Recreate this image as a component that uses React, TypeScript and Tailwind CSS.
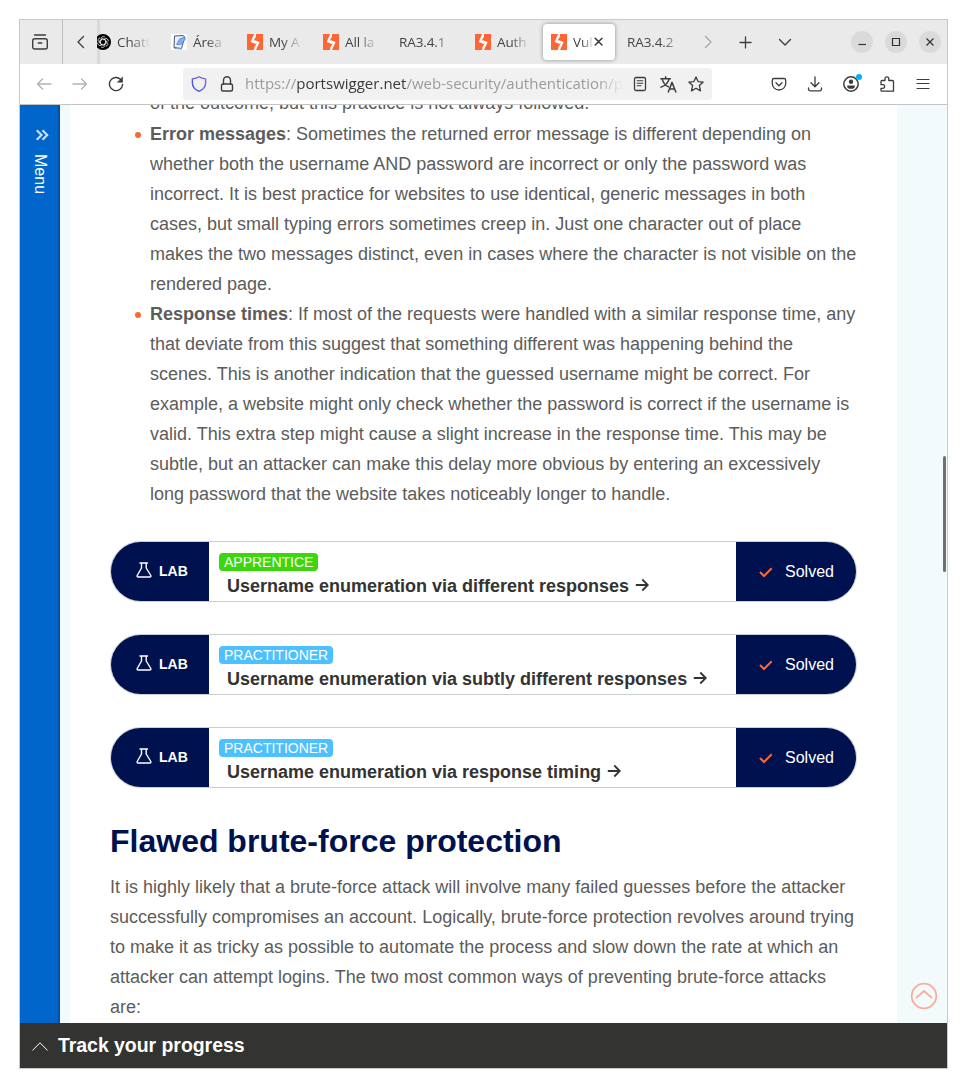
import type { ReactNode } from 'react';

const uiFont = "font-['Open_Sans','Noto_Sans',sans-serif]";
const pageFont = "font-['Liberation_Sans',Arial,sans-serif]";

function Icon({ children, size = 16, w = 1.4, cls = '' }: { children: ReactNode; size?: number; w?: number; cls?: string }) {
  return (
    <svg width={size} height={size} viewBox="0 0 16 16" fill="none" stroke="currentColor" strokeWidth={w} strokeLinecap="round" strokeLinejoin="round" className={`shrink-0 ${cls}`}>
      {children}
    </svg>
  );
}

function BurpLogo() {
  return (
    <svg width="16" height="16" viewBox="0 0 16 16" className="shrink-0">
      <rect width="16" height="16" fill="#ff6633" />
      <path d="M7.2 0H9V2.6L6.6 6.6L9 7.9V9.9L3.6 7.9Z" fill="#fff" />
      <path d="M9 16H7.2V13.4L9.7 9.6L7.2 8.2V6.1L12.6 8.1Z" fill="#fff" />
    </svg>
  );
}

function ChatLogo() {
  return (
    <svg width="16" height="16" viewBox="0 0 16 16" className="shrink-0">
      <circle cx="8" cy="8" r="8" fill="#000" />
      <g fill="none" stroke="#fff" strokeWidth="0.7">
        {[0, 60, 120, 180, 240, 300].map((a) => (
          <path key={a} transform={`rotate(${a} 8 8)`} d="M6.200 7V4.400A2.200 2.200 0 0 1 10.200 3.500M6.200 5.800L8.200 4.700L11 6.300" />
        ))}
      </g>
    </svg>
  );
}

function NoteLogo() {
  return (
    <svg width="16" height="16" viewBox="0 0 16 16" className="shrink-0">
      <rect width="16" height="16" fill="#fff" />
      <path d="M3.500 2L12 1.500L13.800 3L10.500 14.500L3 13.500Z" fill="#e9f1fd" stroke="#34456b" strokeWidth="0.900" />
      <path d="M5.500 10.500L8.500 5L13.500 3L14.500 5L10 10.500Z" fill="#85aef5" stroke="#3569c4" strokeWidth="0.600" />
      <path d="M3 14.500L11 15" stroke="#8aa2cc" />
    </svg>
  );
}

const tabs: { label: string; icon?: ReactNode; active?: boolean }[] = [
  { label: 'ChatG', icon: <ChatLogo /> },
  { label: 'Área', icon: <NoteLogo /> },
  { label: 'My A', icon: <BurpLogo /> },
  { label: 'All la', icon: <BurpLogo /> },
  { label: 'RA3.4.1' },
  { label: 'Auth', icon: <BurpLogo /> },
  { label: 'Vul', icon: <BurpLogo />, active: true },
  { label: 'RA3.4.2' },
];

function Tab({ label, icon, active }: { label: string; icon?: ReactNode; active?: boolean }) {
  return (
    <div className="flex h-11 w-[76px] shrink-0 items-center px-0.5">
      <div className={`flex h-9 w-[72px] items-center rounded px-2 ${active ? 'bg-white shadow-[0_0_4px_rgba(0,0,0,0.4)]' : ''}`}>
        {icon && <span className="mr-1.5 flex">{icon}</span>}
        <span
          className={`min-w-0 flex-1 overflow-hidden text-[13.5px] leading-5 tracking-[-0.1px] whitespace-nowrap text-[#444] ${
            icon ? 'mask-[linear-gradient(to_right,black_40%,transparent_98%)]' : 'mask-[linear-gradient(to_right,black_65%,transparent_98%)]'
          }`}
        >
          {label}
        </span>
        {active && (
          <Icon size={12} w={1.9} cls="-ml-0.5 mr-0.5 text-[#333]">
            <path d="M3 3l9 9M12 3l-9 9" />
          </Icon>
        )}
      </div>
    </div>
  );
}

function TabBar() {
  return (
    <div className="flex h-11 shrink-0 items-center bg-[#eaeaea] text-[#3c3c3c]">
      <div className="flex h-11 w-[43px] items-center justify-center border-r border-[#bdbdbd] pr-0.5">
        <svg width="18" height="16" viewBox="0 0 18 16" fill="none" stroke="currentColor" strokeWidth="1.4" strokeLinecap="round">
          <path d="M3.5 1h11" />
          <rect x="1.7" y="4.7" width="14.6" height="10.3" rx="2" />
          <path d="M7.2 9h3.6" />
        </svg>
      </div>
      <div className="flex w-[34px] justify-center pl-0.5">
        <Icon w={1.3}><path d="M10.5 2.5L5 8l5.500 5.500" /></Icon>
      </div>
      <div className="w-[596px] overflow-hidden bg-linear-to-r from-[#d8d8d8] from-[2px] to-transparent to-[4px]">
        <div className="-ml-3 flex">
          {tabs.map((t, i) => <Tab key={i} {...t} />)}
        </div>
      </div>
      <div className="flex w-[30px] justify-center text-[#a5a5a5]">
        <Icon w={1.3}><path d="M5.500 2.500L11 8l-5.500 5.500" /></Icon>
      </div>
      <div className="flex w-[42px] justify-center pl-px">
        <Icon w={1.3}><path d="M8.500 3v11M3 8.500h11" /></Icon>
      </div>
      <div className="flex w-10 justify-center">
        <Icon w={1.4}><path d="M2.500 5.500L8 11l5.500-5.500" /></Icon>
      </div>
      <div className="ml-auto flex gap-3 pr-1.5">
        {['M4.500 10.500h7.500', 'M4.500 4.500h7v7h-7z', 'M4.500 4.500l7 7M11.500 4.500l-7 7'].map((d) => (
          <div key={d} className="flex size-[22px] items-center justify-center rounded-full bg-[#dadada]">
            <svg width="16" height="16" viewBox="0 0 16 16" fill="none" stroke="#333" strokeWidth="1.2"><path d={d} /></svg>
          </div>
        ))}
      </div>
    </div>
  );
}

function Cell({ children }: { children: ReactNode }) {
  return <div className="flex w-9 justify-center">{children}</div>;
}

function Toolbar() {
  return (
    <div className="flex h-[41px] shrink-0 items-center border-b border-[#c4c4c4] bg-white pl-1.5 text-[#3c3c3c]">
      <div className="flex text-[#b3b3b3]">
        <Cell><Icon w={1.4}><path d="M15 8H1.500M6.500 3L1.500 8l5 5" /></Icon></Cell>
        <Cell><Icon w={1.4}><path d="M1 8h13.500M9.500 3l5 5-5 5" /></Icon></Cell>
      </div>
      <Cell>
        <Icon w={1.4}>
          <path d="M12.500 3.200A6.600 6.600 0 1 0 14.600 8.500" />
          <path d="M14.600 1.200v5h-5z" fill="currentColor" strokeWidth="0.600" />
        </Icon>
      </Cell>
      <div className="ml-[49px] flex h-8 w-[529px] items-center rounded bg-[#f1f1f1] pl-0.5">
        <div className="flex w-7 justify-center">
          <svg width="16" height="16" viewBox="0 0 16 16" fill="none" strokeWidth="1.4" strokeLinejoin="round">
            <defs><linearGradient id="shield" x1="0" y1="1" x2="1" y2="0"><stop stopColor="#3457d5" /><stop offset="1" stopColor="#8a63f0" /></linearGradient></defs>
            <path stroke="url(#shield)" d="M8 .8C6.300 2 3.800 2.700 1.400 2.900V7c0 4 2.800 6.800 6.600 8.300C11.800 13.800 14.600 11 14.600 7V2.900C12.200 2.700 9.700 2 8 .8z" />
          </svg>
        </div>
        <div className="flex w-7 justify-center">
          <Icon w={1.4}>
            <rect x="2.500" y="8" width="11" height="7" rx="1.500" />
            <path d="M4.500 8V4.200a3.500 3.500 0 0 1 7 0V8" />
          </Icon>
        </div>
        <div className="-mt-0.5 ml-1 w-[378px] overflow-hidden mask-[linear-gradient(to_right,black_93%,transparent_100%)] text-[15px] leading-6 tracking-[0.01px] whitespace-nowrap text-[#9b9b9b]">
          https://<span className="text-[#3a3a3a]">portswigger.net</span>/web-security/authentication/pa
        </div>
        <div className="flex pl-[3px]">
          <div className="flex w-7 justify-center">
            <Icon w={1.3}>
              <rect x="2.500" y="1.500" width="11" height="13" rx="1.500" />
              <path d="M5.200 4.700h5.600M5.200 7.200h5.600M5.200 9.700h3.800" strokeWidth="1.100" />
            </Icon>
          </div>
          <div className="flex w-7 justify-center">
            <Icon w={1.400} size={17}>
              <path d="M.8 2.500h9M5.300 .8v1.700M2 2.700c1 4 3.800 6.500 6 7.500M8.600 2.700C7.600 6.500 4.500 9.300 1 10.500" />
              <path d="M7.800 15l3.500-9 3.600 9M9 12.300h4.700" />
            </Icon>
          </div>
          <div className="flex w-7 justify-center">
            <Icon w={1.300}><path d="M8 .9l2.100 4.700 5.100.5-3.800 3.500 1.100 5.300L8 12.300l-4.500 2.600 1.100-5.300L.8 6.100l5.100-.5z" /></Icon>
          </div>
        </div>
      </div>
      <div className="ml-[49px] flex">
        <Cell>
          <Icon w={1.300}>
            <path d="M3 2.500h10a1.700 1.700 0 0 1 1.700 1.700v3.300a6.700 6.500 0 0 1-13.400 0V4.200A1.700 1.700 0 0 1 3 2.500z" />
            <path d="M5 6.700l3 3 3-3" />
          </Icon>
        </Cell>
        <Cell>
          <Icon w={1.300}>
            <path d="M8 .8v9.700M4 6.700l4 4 4-4M1.500 12v1a1.800 1.800 0 0 0 1.800 1.800h9.400a1.800 1.800 0 0 0 1.800-1.800v-1" />
          </Icon>
        </Cell>
        <div className="relative flex w-9 justify-center">
          <Icon w={1.500}>
            <circle cx="8" cy="8" r="7.200" />
            <circle cx="8" cy="5.800" r="2.200" fill="currentColor" stroke="none" />
            <path d="M4.200 9.500h7.600v1a3.800 2.300 0 0 1-7.600 0z" fill="currentColor" stroke="none" />
          </Icon>
          <span className="absolute -top-0.5 left-[23px] size-1.5 rounded-full bg-[#00b0ff]" />
        </div>
        <Cell>
          <Icon w={1.300}>
            <path d="M2 7V5.500a1 1 0 0 1 1-1h3V2.800a1.900 1.900 0 0 1 3.800 0v1.700h3.700a1 1 0 0 1 1 1v9.700H2.800a.8.800 0 0 1-.8-.8v-2.100h1.900a1.700 1.700 0 0 0 0-3.600H2z" />
          </Icon>
        </Cell>
        <Cell>
          <Icon w={1.200}><path d="M2 3.500h12M2 7.500h12M2 12.500h12" /></Icon>
        </Cell>
      </div>
    </div>
  );
}

function Lines({ lines }: { lines: ReactNode[] }) {
  return <>{lines.map((l, i) => <span key={i} className="block whitespace-nowrap">{l}</span>)}</>;
}

function Bullet({ lines }: { lines: ReactNode[] }) {
  return (
    <li className="flex">
      <span className="mt-[13px] mr-[9.500px] ml-[24.500px] size-1.5 shrink-0 rounded-full bg-[#ff6633]" />
      <div><Lines lines={lines} /></div>
    </li>
  );
}

function Lab({ level, title, color }: { level: string; title: string; color: string }) {
  return (
    <div className="flex h-[61px] w-[747px] overflow-hidden rounded-[31px] border border-[#c8cfcf] bg-white">
      <div className="flex w-[98px] shrink-0 items-center bg-[#00114f] pb-0.5 pl-[25px] text-sm font-bold text-white">
        <Icon w={1.400} cls="mr-[7px] -mt-0.5">
          <path d="M4 1h7.500M5.500 1v5L1.200 13.500c-.4.900.1 1.500 1 1.500h11.600c.9 0 1.400-.6 1-1.500L10.200 6V1" />
        </Icon>
        LAB
      </div>
      <div className="flex flex-1 flex-col items-start pt-[11px] pl-2.5">
        <span className={`h-[18px] rounded px-[5px] text-sm leading-[18px] text-white ${color}`}>{level}</span>
        <span className="mt-1 flex h-[22px] items-center pl-2 text-lg leading-[22px] font-bold whitespace-nowrap text-[#333332]">
          {title}
          <svg width="14" height="14" viewBox="0 0 14 14" fill="none" stroke="currentColor" strokeWidth="1.8" className="-mt-0.5 ml-1.5">
            <path d="M.8 7h12M7.300 1.500L12.800 7 7.300 12.500" />
          </svg>
        </span>
      </div>
      <div className="flex w-[120px] shrink-0 items-center bg-[#00114f] pl-[22px] text-base text-white">
        <svg width="16" height="12" viewBox="0 0 16 12" fill="none" stroke="#ff6633" strokeWidth="2" className="mr-[11px]">
          <path d="M2 6l4 4 7.700-7.700" />
        </svg>
        Solved
      </div>
    </div>
  );
}

export default function App() {
  return (
    <div className="h-[1088px] w-[967px] overflow-hidden bg-white pt-[19px] pl-[19px]">
      <div className={`flex h-[1050px] w-[929px] flex-col overflow-hidden border border-[#c9c9c9] bg-white ${uiFont}`}>
        <TabBar />
        <Toolbar />
        <div className={`flex h-[918px] overflow-hidden bg-[#f2fafc] ${pageFont}`}>
          <aside className="flex w-10 shrink-0 flex-col items-center bg-[#0066cc] pt-[23px] text-white shadow-[inset_-2px_0_1px_rgba(0,0,0,0.2)]">
            <Icon size={14} w={2.4} cls="ml-1 opacity-80"><path d="M2 2.500L7.500 8 2 13.500M8.500 2.500L14 8l-5.500 5.500" strokeLinecap="butt" strokeLinejoin="miter" /></Icon>
            <span className="mt-3 text-base leading-5 [writing-mode:vertical-rl]">Menu</span>
          </aside>
          <main className="-mt-[17px] ml-2.5 w-[827px] shrink-0 bg-white pl-10 text-lg leading-[30px] text-[#5c5c5b]">
            <p className="mb-px pl-10 whitespace-nowrap">of the outcome, but this practice is not always followed.</p>
            <ul>
              <Bullet lines={[
                <><b>Error messages</b>: Sometimes the returned error message is different depending on</>,
                'whether both the username AND password are incorrect or only the password was',
                'incorrect. It is best practice for websites to use identical, generic messages in both',
                'cases, but small typing errors sometimes creep in. Just one character out of place',
                'makes the two messages distinct, even in cases where the character is not visible on the',
                'rendered page.',
              ]} />
              <Bullet lines={[
                <><b>Response times</b>: If most of the requests were handled with a similar response time, any</>,
                'that deviate from this suggest that something different was happening behind the',
                'scenes. This is another indication that the guessed username might be correct. For',
                'example, a website might only check whether the password is correct if the username is',
                'valid. This extra step might cause a slight increase in the response time. This may be',
                'subtle, but an attacker can make this delay more obvious by entering an excessively',
                'long password that the website takes noticeably longer to handle.',
              ]} />
            </ul>
            <div className="mt-8 flex flex-col gap-8">
              <Lab level="APPRENTICE" color="bg-[#3bd70a]" title="Username enumeration via different responses" />
              <Lab level="PRACTITIONER" color="bg-[#4dc0ff]" title="Username enumeration via subtly different responses" />
              <Lab level="PRACTITIONER" color="bg-[#4dc0ff]" title="Username enumeration via response timing" />
            </div>
            <h2 className="mt-8 text-[32px] leading-[42px] font-bold whitespace-nowrap text-[#00114f]">Flawed brute-force protection</h2>
            <p className="mt-2.5">
              <Lines lines={[
                'It is highly likely that a brute-force attack will involve many failed guesses before the attacker',
                'successfully compromises an account. Logically, brute-force protection revolves around trying',
                'to make it as tricky as possible to automate the process and slow down the rate at which an',
                'attacker can attempt logins. The two most common ways of preventing brute-force attacks',
                'are:',
              ]} />
            </p>
          </main>
          <div className="flex flex-1 flex-col items-end">
            <div className="mt-[351px] mr-px h-[116px] w-[3px] rounded-sm bg-[#707070]" />
            <svg width="28" height="28" viewBox="0 0 28 28" fill="none" stroke="#f9ae98" strokeWidth="1.800" className="mt-[410px] mr-[9px]">
              <circle cx="14" cy="14" r="12.300" />
              <path d="M6 16l8-7 8 7" />
            </svg>
          </div>
        </div>
        <footer className={`flex h-[45px] shrink-0 items-center bg-[#333332] pl-3 text-[19.5px] font-bold tracking-[-0.05px] text-white ${pageFont}`}>
          <svg width="16" height="9" viewBox="0 0 16 9" fill="none" stroke="#fff" strokeWidth="1" className="mr-2.5 mt-0.5"><path d="M.4 8.500L8 .8l7.600 7.700" /></svg>
          Track your progress
        </footer>
      </div>
    </div>
  );
}
